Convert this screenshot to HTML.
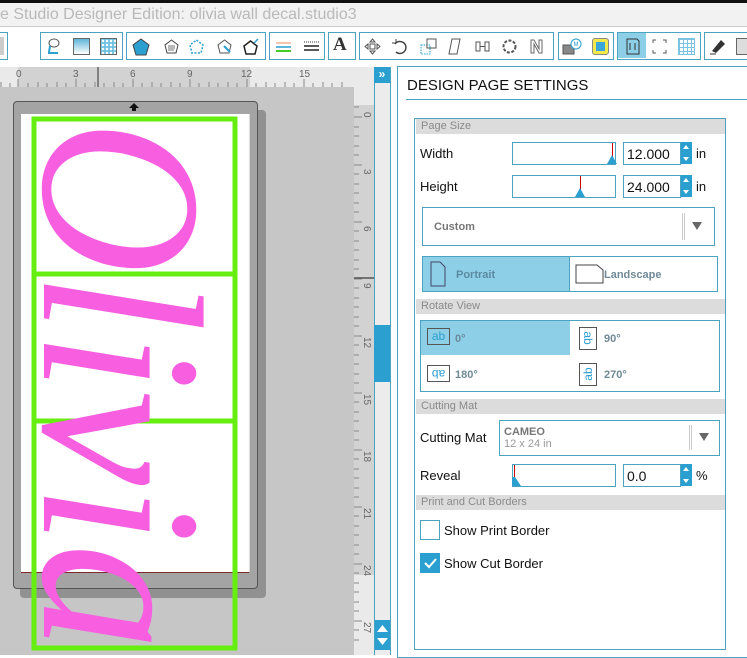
<!DOCTYPE html>
<html><head><meta charset="utf-8"><style>
*{margin:0;padding:0;box-sizing:border-box}
body{width:747px;height:655px;overflow:hidden;background:#fff;font-family:"Liberation Sans",sans-serif;position:relative}
.a{position:absolute}
.grp{position:absolute;top:32px;height:28px;border:1.5px solid #4aa3c0;background:#fff}
.ic{position:absolute;top:5px;width:17px;height:17px}
.hdr{position:absolute;left:416px;width:309px;height:15px;background:#dcdcdc;color:#8a8a8a;font-size:11px;padding-left:5px;line-height:15px}
.lbl{position:absolute;font-size:13px;color:#111}
.box{position:absolute;border:1.5px solid #4aa3c0;background:#fff}
.spin{position:absolute;width:11px;height:22px;background:#2a9fd0}
.spin:before{content:"";position:absolute;left:2px;top:3px;border:3.5px solid transparent;border-bottom:4px solid #fff;border-top:0}
.spin:after{content:"";position:absolute;left:2px;bottom:3px;border:3.5px solid transparent;border-top:4px solid #fff;border-bottom:0}
.gt{color:#6f8a96;font-weight:bold;font-size:11px}
</style></head><body>
<div class="a" style="left:0;top:0;width:747px;height:3px;background:#111"></div>
<div class="a" style="left:0;top:3px;width:747px;height:24px;background:#f2f2f2;border-bottom:1px solid #ccc;color:#b9b9b9;font-size:16px;line-height:24px;padding-left:0;white-space:nowrap">e Studio Designer Edition: olivia wall decal.studio3</div>
<!-- toolbar -->
<div class="grp" style="left:-3px;width:11px"><div class="a" style="left:1px;top:4px;width:5px;height:18px;background:#ccc"></div></div>
<div class="grp" style="left:40px;width:83px">
 <svg class="ic" style="left:4px" viewBox="0 0 17 17"><ellipse cx="9" cy="5" rx="5" ry="4" fill="#fff" stroke="#555"/><path d="M3 15h10" stroke="#2a9fd0" stroke-width="2"/><path d="M5 8l-1 6" stroke="#2a9fd0" stroke-width="2"/></svg>
 <div class="ic" style="left:32px;border:1px solid #666;background:linear-gradient(#5fb5d8,#fff)"></div>
 <div class="ic" style="left:59px;border:1px solid #666;background:radial-gradient(circle,#fff 1px,#6dc0e0 1.5px) 0 0/4px 4px"></div>
</div>
<div class="grp" style="left:126px;width:140px">
 <svg class="ic" style="left:5px;width:18px;height:18px" viewBox="0 0 18 18"><path d="M9 1L17 7L14 17H4L1 7Z" fill="#2a9fd0" stroke="#444"/></svg>
 <svg class="ic" style="left:36px" viewBox="0 0 17 17"><path d="M8.5 2L15 7L13 15H4L2 7Z" fill="#fff" stroke="#444"/><path d="M5 8h7M5 10h7M5 12h6" stroke="#444" stroke-width=".8"/></svg>
 <svg class="ic" style="left:61px" viewBox="0 0 17 17"><path d="M8.5 2L15 7L13 15H4L2 7Z" fill="none" stroke="#2a9fd0" stroke-dasharray="2 1.5" stroke-width="1.5"/></svg>
 <svg class="ic" style="left:89px" viewBox="0 0 17 17"><path d="M8.5 2L15 7L13 15H4L2 7Z" fill="#fff" stroke="#555"/><path d="M8 8l6 6" stroke="#2a9fd0" stroke-width="2"/></svg>
 <svg class="ic" style="left:115px" viewBox="0 0 17 17"><path d="M8.5 3L15 8L13 16H4L2 8Z" fill="#fff" stroke="#222" stroke-width="1.5"/><path d="M12 5l4-4" stroke="#2a9fd0" stroke-width="1.5"/></svg>
</div>
<div class="grp" style="left:269px;width:56px">
 <svg class="ic" style="left:5px" viewBox="0 0 17 17"><path d="M1 5h15" stroke="#f0b090" stroke-width="1.5"/><path d="M1 9h15" stroke="#2a9fd0" stroke-width="1.5"/><path d="M1 13h15" stroke="#44cc22" stroke-width="2"/></svg>
 <svg class="ic" style="left:33px" viewBox="0 0 17 17"><path d="M1 4h15" stroke="#333" stroke-dasharray="1 1"/><path d="M1 8h15M1 12h15" stroke="#222" stroke-width="1.5"/></svg>
</div>
<div class="grp" style="left:328px;width:28px"><div class="a" style="left:4px;top:1px;font:bold 19px 'Liberation Serif',serif;color:#333">A</div></div>
<div class="grp" style="left:359px;width:195px">
 <svg class="ic" style="left:4px" viewBox="0 0 17 17"><path d="M8.5 1L11 4H6ZM8.5 16L11 13H6ZM1 8.5L4 6V11ZM16 8.5L13 6V11Z M6 6h5v5H6z" fill="#fff" stroke="#555"/></svg>
 <svg class="ic" style="left:31px" viewBox="0 0 17 17"><path d="M4 6a6 6 0 1 1 1 8" fill="none" stroke="#444" stroke-width="1.5"/><path d="M1 5l4 0 0-4" fill="none" stroke="#444"/></svg>
 <svg class="ic" style="left:60px" viewBox="0 0 17 17"><rect x="1" y="7" width="9" height="9" fill="none" stroke="#2a9fd0" stroke-dasharray="1.5 1"/><rect x="7" y="1" width="9" height="9" fill="none" stroke="#555"/></svg>
 <svg class="ic" style="left:87px" viewBox="0 0 17 17"><path d="M5 1h8L10 16H2Z" fill="#fff" stroke="#555"/></svg>
 <svg class="ic" style="left:114px" viewBox="0 0 17 17"><rect x="2" y="4" width="4" height="9" fill="#fff" stroke="#555"/><rect x="11" y="4" width="4" height="9" fill="#fff" stroke="#555"/><path d="M6 8.5h5" stroke="#555"/></svg>
 <svg class="ic" style="left:141px" viewBox="0 0 17 17"><circle cx="8.5" cy="8.5" r="6" fill="#fff" stroke="#555" stroke-dasharray="3 1.5" stroke-width="2"/></svg>
 <svg class="ic" style="left:168px" viewBox="0 0 17 17"><path d="M3 15V2h3l5 9V2h3v13h-3L6 6v9Z" fill="#fff" stroke="#666"/></svg>
</div>
<div class="grp" style="left:558px;width:56px">
 <svg class="ic" style="left:3px;width:20px" viewBox="0 0 20 17"><rect x="1" y="7" width="11" height="9" fill="#888" stroke="#555"/><circle cx="14" cy="6" r="5" fill="#fff" stroke="#2a9fd0"/><text x="11.5" y="8" font-size="6" fill="#2a9fd0" font-family="Liberation Sans">M</text></svg>
 <div class="ic" style="left:33px;border:1px solid #888;border-radius:3px;background:#f3e94d"><div class="a" style="left:3px;top:3px;width:9px;height:9px;background:#3aa5d8"></div></div>
</div>
<div class="grp" style="left:617px;width:84px">
 <div class="a" style="left:0;top:0;width:28px;height:25px;background:#8ecfe8"></div>
 <svg class="ic" style="left:6px" viewBox="0 0 17 17"><path d="M3 1h10l2 2v13H3Z" fill="none" stroke="#333"/><path d="M6 5v7M11 5v7" stroke="#333"/></svg>
 <svg class="ic" style="left:33px" viewBox="0 0 17 17"><path d="M2 5V2h3M12 2h3v3M15 12v3h-3M5 15H2v-3" fill="none" stroke="#555"/></svg>
 <div class="ic" style="left:60px;background:linear-gradient(90deg,#7cc3e3 1px,transparent 1px) 0 0/4px 4px,linear-gradient(#7cc3e3 1px,transparent 1px) 0 0/4px 4px;border:1px solid #7cc3e3"></div>
</div>
<div class="grp" style="left:704px;width:50px">
 <svg class="ic" style="left:4px" viewBox="0 0 17 17"><path d="M3 13L12 2l4 4-9 9z" fill="#333"/><path d="M1 16h6" stroke="#333"/></svg>
 <div class="ic" style="left:31px;border:1px solid #666;background:#ddd"></div>
</div>
<!-- canvas area -->
<div class="a" style="left:0;top:64px;width:395px;height:591px;background:#fff"></div>
<div class="a" style="left:0;top:67px;width:355px;height:20px;background:#eaeaea"></div>
<div class="a" style="left:18px;top:67px;width:232px;height:20px;background:#d2d2d2"></div>
<svg class="a" style="left:0;top:67px" width="355" height="20">
 <g stroke="#888" stroke-width="1">
 <path d="M1 20v-5M10 20v-4M18 20v-8M28 20v-4M38 20v-5M47 20v-4M57 20v-5M66 20v-4M76 20v-8M85 20v-4M95 20v-5M104 20v-4M114 20v-5M123 20v-4M133 20v-8M142 20v-4M152 20v-5M161 20v-4M171 20v-5M180 20v-4M190 20v-8M199 20v-4M209 20v-5M218 20v-4M228 20v-5M237 20v-4M247 20v-8M256 20v-4M266 20v-5M275 20v-4M285 20v-5M294 20v-4M304 20v-8M313 20v-4M323 20v-5M332 20v-4M342 20v-5"/>
 </g>
 <path d="M98 0v20" stroke="#666" stroke-width="1.5"/>
 <g font-size="10" fill="#666" font-family="Liberation Sans"><text x="16" y="10">0</text><text x="73" y="10">3</text><text x="130" y="10">6</text><text x="187" y="10">9</text><text x="241" y="10">12</text><text x="299" y="10">15</text></g>
</svg>
<div class="a" style="left:0;top:87px;width:355px;height:568px;background:#c6c6c6"></div>
<div class="a" style="left:354px;top:67px;width:20px;height:588px;background:#eaeaea"></div>
<div class="a" style="left:354px;top:105px;width:20px;height:470px;background:#d2d2d2"></div>
<svg class="a" style="left:354px;top:67px" width="20" height="588">
 <g stroke="#888"><path d="M0 40h5M0 50h8M0 60h5M0 69h5M0 79h5M0 88h5M0 98h8M0 107h5M0 117h5M0 126h5M0 136h5M0 145h5M0 155h8M0 164h5M0 174h5M0 183h5M0 193h5M0 202h5M0 212h8M0 221h5M0 231h5M0 240h5M0 250h5M0 259h5M0 269h8M0 278h5M0 288h5M0 297h5M0 307h5M0 316h5M0 326h8M0 335h5M0 345h5M0 354h5M0 364h5M0 373h5M0 383h8M0 392h5M0 402h5M0 411h5M0 421h5M0 430h5M0 440h8M0 449h5M0 459h5M0 468h5M0 478h5M0 487h5M0 497h8M0 506h5M0 516h5M0 525h5M0 535h5M0 544h5M0 554h8M0 563h5M0 573h5"/></g>
 <path d="M0 211h20" stroke="#555" stroke-width="1.5"/>
 <g font-size="10" fill="#666" font-family="Liberation Sans">
 <text transform="translate(10,45) rotate(90)">0</text><text transform="translate(10,102) rotate(90)">3</text><text transform="translate(10,159) rotate(90)">6</text><text transform="translate(10,216) rotate(90)">9</text><text transform="translate(10,270) rotate(90)">12</text><text transform="translate(10,327) rotate(90)">15</text><text transform="translate(10,384) rotate(90)">18</text><text transform="translate(10,441) rotate(90)">21</text><text transform="translate(10,498) rotate(90)">24</text><text transform="translate(10,555) rotate(90)">27</text></g>
</svg>
<div class="a" style="left:374px;top:67px;width:17px;height:588px;background:#ececec;border-left:1px solid #4aa3c0;border-right:1px solid #4aa3c0"></div>
<div class="a" style="left:374px;top:67px;width:16px;height:16px;background:#2a9fd0;color:#fff;font:bold 12px 'Liberation Sans';text-align:center;line-height:15px">»</div>
<div class="a" style="left:374px;top:325px;width:16px;height:57px;background:#2a9fd0"></div>
<div class="a" style="left:375px;top:620px;width:15px;height:30px;background:#2a9fd0"></div>
<svg class="a" style="left:375px;top:620px" width="15" height="30"><path d="M2 12L7.5 5L13 12Z M2 18L7.5 25L13 18Z" fill="#fff"/></svg>
<!-- mat -->
<div class="a" style="left:20px;top:110px;width:246px;height:488px;background:#666;border-radius:4px;opacity:.55"></div>
<div class="a" style="left:13px;top:101px;width:245px;height:488px;background:#a4a4a4;border:1px solid #555;border-radius:4px"></div>
<svg class="a" style="left:128px;top:102px" width="12" height="10"><path d="M6 1L11 6H8V9H4V6H1Z" fill="#111"/></svg>
<div class="a" style="left:21px;top:114px;width:229px;height:459px;background:#fff;border-bottom:1px solid #7a2a2a;border-right:1px solid #ddd"></div>
<svg class="a" style="left:0;top:100px" width="270" height="555">
 <g fill="none" stroke="#66ee11" stroke-width="5">
  <rect x="34" y="19" width="201" height="529"/>
  <path d="M34 174H235M34 321H235"/>
 </g>
 <text transform="translate(44,20) rotate(90)" font-family="Liberation Serif" font-style="italic" font-size="230" fill="#f75fe0" textLength="530" lengthAdjust="spacingAndGlyphs" dy="0">Olivia</text>
</svg>
<!-- right panel -->
<div class="a" style="left:397px;top:66px;width:352px;height:592px;border:1.5px solid #4aa3c0;background:#fff"></div>
<div class="a" style="left:407px;top:77px;font-size:15px;color:#111">DESIGN PAGE SETTINGS</div>
<div class="a" style="left:406px;top:99px;width:341px;height:1px;background:#4aa3c0"></div>
<div class="a" style="left:414px;top:118px;width:312px;height:532px;border:1.5px solid #4aa3c0"></div>
<div class="hdr" style="top:119px">Page Size</div>
<div class="lbl" style="left:420px;top:146px">Width</div>
<div class="box" style="left:512px;top:142px;width:104px;height:23px"></div>
<div class="a" style="left:612px;top:143px;width:1px;height:14px;background:#c00"></div>
<svg class="a" style="left:607px;top:155px" width="10" height="9"><path d="M5 0L10 9H0Z" fill="#2a9fd0"/></svg>
<div class="box" style="left:623px;top:142px;width:58px;height:23px;font-size:14px;padding:3px 0 0 3px;color:#111">12.000</div>
<div class="spin" style="left:681px;top:142px"></div>
<div class="lbl" style="left:696px;top:146px">in</div>
<div class="lbl" style="left:420px;top:179px">Height</div>
<div class="box" style="left:512px;top:175px;width:104px;height:23px"></div>
<div class="a" style="left:580px;top:176px;width:1px;height:14px;background:#c00"></div>
<svg class="a" style="left:575px;top:188px" width="10" height="9"><path d="M5 0L10 9H0Z" fill="#2a9fd0"/></svg>
<div class="box" style="left:623px;top:175px;width:58px;height:23px;font-size:14px;padding:3px 0 0 3px;color:#111">24.000</div>
<div class="spin" style="left:681px;top:175px"></div>
<div class="lbl" style="left:696px;top:179px">in</div>
<div class="box" style="left:422px;top:207px;width:293px;height:39px"><span class="gt a" style="left:11px;top:13px;color:#777">Custom</span><div class="a" style="left:259px;top:5px;width:3px;height:27px;border-left:1px solid #ccc;border-right:1px solid #ccc"></div><svg class="a" style="left:269px;top:14px" width="10" height="8"><path d="M0 0H10L5 8Z" fill="#666"/></svg></div>
<div class="box" style="left:422px;top:256px;width:296px;height:36px"></div>
<div class="a" style="left:423px;top:257px;width:147px;height:34px;background:#8ecfe8;border-right:1.5px solid #4aa3c0"></div>
<svg class="a" style="left:430px;top:261px" width="16" height="26"><path d="M1 1H10L15 6V25H1Z" fill="none" stroke="#446"/></svg>
<span class="gt a" style="left:456px;top:269px;color:#5b8aa0">Portrait</span>
<svg class="a" style="left:575px;top:264px" width="30" height="20"><path d="M1 1H22L28 6V19H1Z" fill="#fff" stroke="#444"/></svg>
<span class="gt a" style="left:604px;top:269px">Landscape</span>
<div class="hdr" style="top:299px">Rotate View</div>
<div class="box" style="left:420px;top:320px;width:300px;height:72px"></div>
<div class="a" style="left:421px;top:321px;width:149px;height:34px;background:#8ecfe8"></div>
<div class="a" style="left:427px;top:328px;width:23px;height:17px;border:1px solid #555;color:#2a9fd0;font-size:12px;line-height:15px;text-align:center">ab</div>
<span class="gt a" style="left:455px;top:333px;color:#6a8a9a">0°</span>
<div class="a" style="left:579px;top:327px;width:18px;height:23px;border:1px solid #555"><div style="transform:rotate(90deg);color:#2a9fd0;font-size:12px;margin-top:3px;text-align:center">ab</div></div>
<span class="gt a" style="left:604px;top:333px">90°</span>
<div class="a" style="left:427px;top:365px;width:23px;height:17px;border:1px solid #555"><div style="transform:rotate(180deg);color:#2a9fd0;font-size:12px;text-align:center;line-height:15px">ab</div></div>
<span class="gt a" style="left:455px;top:369px">180°</span>
<div class="a" style="left:579px;top:363px;width:18px;height:23px;border:1px solid #555"><div style="transform:rotate(-90deg);color:#2a9fd0;font-size:12px;margin-top:3px;text-align:center">ab</div></div>
<span class="gt a" style="left:604px;top:369px">270°</span>
<div class="hdr" style="top:399px">Cutting Mat</div>
<div class="lbl" style="left:420px;top:430px">Cutting Mat</div>
<div class="box" style="left:499px;top:420px;width:221px;height:36px"><span class="gt a" style="left:4px;top:5px;color:#777">CAMEO</span><span class="a" style="left:4px;top:17px;font-size:11px;color:#999">12 x 24 in</span><div class="a" style="left:189px;top:4px;width:3px;height:25px;border-left:1px solid #ccc;border-right:1px solid #ccc"></div><svg class="a" style="left:199px;top:12px" width="10" height="8"><path d="M0 0H10L5 8Z" fill="#666"/></svg></div>
<div class="lbl" style="left:420px;top:468px">Reveal</div>
<div class="box" style="left:512px;top:464px;width:104px;height:23px"></div>
<div class="a" style="left:514px;top:465px;width:1px;height:14px;background:#c00"></div>
<svg class="a" style="left:512px;top:477px" width="10" height="9"><path d="M3 0L9 9H0V0Z" fill="#2a9fd0"/></svg>
<div class="box" style="left:623px;top:464px;width:58px;height:23px;font-size:14px;padding:3px 0 0 3px;color:#111">0.0</div>
<div class="spin" style="left:681px;top:464px"></div>
<div class="lbl" style="left:696px;top:468px">%</div>
<div class="hdr" style="top:495px">Print and Cut Borders</div>
<div class="a" style="left:420px;top:520px;width:20px;height:20px;border:1px solid #4aa3c0"></div>
<div class="lbl" style="left:444px;top:523px">Show Print Border</div>
<div class="a" style="left:420px;top:553px;width:20px;height:20px;background:#2a9fd0"></div>
<svg class="a" style="left:420px;top:553px" width="20" height="20"><path d="M5 10l4 4 7-8" fill="none" stroke="#fff" stroke-width="2"/></svg>
<div class="lbl" style="left:444px;top:556px">Show Cut Border</div>
</body></html>
